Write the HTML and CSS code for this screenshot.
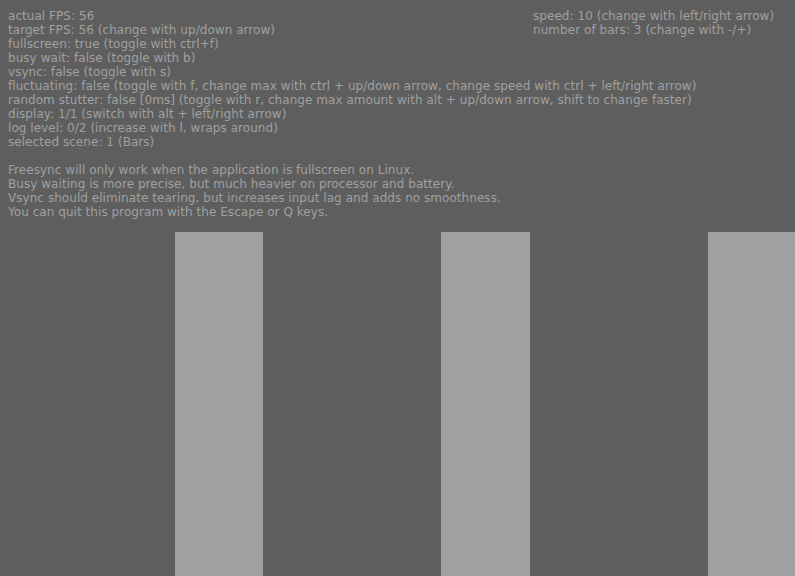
FILE: index.html
```html
<!DOCTYPE html>
<html>
<head>
<meta charset="utf-8">
<link rel="stylesheet" href="styles.css">
</head>
<body>
<div class="screen">
  <div class="hud">
    <div class="info">
      <div>actual FPS: 56</div>
      <div>target FPS: 56 (change with up/down arrow)</div>
      <div>fullscreen: true (toggle with ctrl+f)</div>
      <div>busy wait: false (toggle with b)</div>
      <div>vsync: false (toggle with s)</div>
      <div>fluctuating: false (toggle with f, change max with ctrl + up/down arrow, change speed with ctrl + left/right arrow)</div>
      <div>random stutter: false [0ms] (toggle with r, change max amount with alt + up/down arrow, shift to change faster)</div>
      <div>display: 1/1 (switch with alt + left/right arrow)</div>
      <div>log level: 0/2 (increase with l, wraps around)</div>
      <div>selected scene: 1 (Bars)</div>
      <div class="blank"></div>
      <div>Freesync will only work when the application is fullscreen on Linux.</div>
      <div>Busy waiting is more precise, but much heavier on processor and battery.</div>
      <div>Vsync should eliminate tearing, but increases input lag and adds no smoothness.</div>
      <div>You can quit this program with the Escape or Q keys.</div>
    </div>
    <div class="side">
      <div>speed: 10 (change with left/right arrow)</div>
      <div>number of bars: 3 (change with -/+)</div>
    </div>
  </div>
  <div class="bars">
    <div class="bar"></div>
    <div class="bar"></div>
    <div class="bar"></div>
  </div>
</div>
</body>
</html>
```
FILE: styles.css
```css
html, body {
  margin: 0;
  padding: 0;
  background: #5e5e5e;
}
.screen {
  width: 795px;
  height: 576px;
  overflow: hidden;
  display: flex;
  flex-direction: column;
  font-family: "DejaVu Sans", sans-serif;
  font-size: 12px;
  line-height: 14px;
  letter-spacing: 0.05px;
  color: #a0a0a0;
}
.hud {
  display: grid;
  padding: 9px 0 0 8px;
}
.info, .side {
  grid-area: 1 / 1;
  white-space: nowrap;
}
.side {
  margin-left: 525px;
}
.blank {
  height: 14px;
}
.bars {
  flex: 1;
  display: flex;
  gap: 178px;
  padding-left: 175px;
  margin-top: 13px;
}
.bar {
  flex: 0 0 88px;
  background: #a0a0a0;
}
.bar:nth-child(2) {
  flex-basis: 89px;
}
```
